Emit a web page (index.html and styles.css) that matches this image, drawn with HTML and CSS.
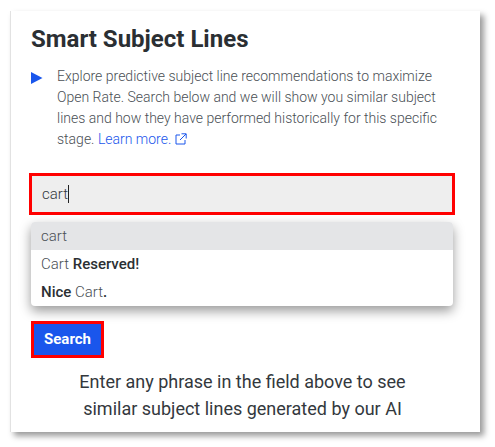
FILE: index.html
```html
<!DOCTYPE html>
<html lang="en">
<head>
<meta charset="utf-8">
<title>Smart Subject Lines</title>
<link rel="stylesheet" href="styles.css">
</head>
<body>
<main class="card">
  <h1 class="title">Smart Subject Lines</h1>
  <div class="intro">
    <svg class="arrow" width="12" height="12" viewBox="0 0 12 12" aria-hidden="true"><path d="M0 0 L11.5 6 L0 12 Z" fill="#1a56ec"/></svg>
    <p class="intro-text">Explore predictive subject line recommendations to maximize Open Rate. Search below and we will show you similar subject lines and how they have performed historically for this specific stage. <a class="link" href="#">Learn more.</a><svg class="ext" width="12" height="12" viewBox="0 0 12 12" aria-hidden="true"><path d="M5 2H1V11H10V7M6.5 0.8H11.2V5.5M11 1L5 7" fill="none" stroke="#1a56ec" stroke-width="1"/></svg></p>
  </div>
  <div class="field"><span class="typed">cart</span><span class="caret"></span></div>
  <ul class="menu">
    <li class="item active">cart</li>
    <li class="item">Cart <b>Reserved!</b></li>
    <li class="item"><b>Nice</b> Cart<b>.</b></li>
  </ul>
  <button class="search" type="button">Search</button>
  <p class="hint">Enter any phrase in the field above to see<br>similar subject lines generated by our AI</p>
</main>
</body>
</html>
```
FILE: styles.css
```css
html, body { margin: 0; padding: 0; background: #fff; }
body { width: 495px; height: 447px; overflow: hidden; font-family: Roboto, sans-serif; }
.card {
  box-sizing: border-box;
  width: 470px;
  height: 421px;
  margin: 11px 0 0 10px;
  padding: 13px 26px 0 20px;
  background: #fff;
  border-left: 1px solid #e2e2e2;
  box-shadow: 4px 4px 6px rgba(0,0,0,.4);
}
.title { margin: 0; font-size: 24px; line-height: 30px; font-weight: 700; color: #2b2f33; }
.intro { display: flex; margin-top: 12px; }
.arrow { flex: none; align-self: flex-start; margin-top: 6px; }
.intro-text { margin: 0 0 0 14px; font-size: 14px; line-height: 21px; font-weight: 300; color: #4a4f55; }
.link { color: #1a56ec; text-decoration: none; }
.ext { margin-left: 4px; vertical-align: -1px; }
.field {
  display: flex;
  align-items: center;
  box-sizing: border-box;
  width: 426px;
  height: 42px;
  margin: 23px 0 0 -2px;
  padding-left: 10px;
  background: #eeeeee;
  border: 3px solid #ff0000;
  font-size: 15px;
  font-weight: 300;
  color: #33383d;
}
.caret { width: 1px; height: 18px; background: #222; }
.menu {
  list-style: none;
  margin: 7px 0 0 0;
  padding: 0;
  width: 422px;
  background: #fff;
  border-radius: 4px;
  overflow: hidden;
  box-shadow: 0 5px 12px rgba(0,0,0,.4);
  font-size: 15px;
  color: #4a4f55;
}
.item { height: 28px; line-height: 28px; padding-left: 10px; font-weight: 300; }
.item b { font-weight: 500; color: #2b2f33; }
.active { background: #e4e5e7; }
.search {
  display: block;
  box-sizing: border-box;
  width: 73px;
  height: 37px;
  margin: 15px 0 0 0;
  padding: 0 0 2px;
  background: #1a56ec;
  border: 3px solid #ff0000;
  color: #fff;
  font: 700 15px Roboto, sans-serif;
}
.hint { margin: 10px 0 0 0; text-align: center; font-size: 18px; line-height: 27px; color: #33383d; }
```
